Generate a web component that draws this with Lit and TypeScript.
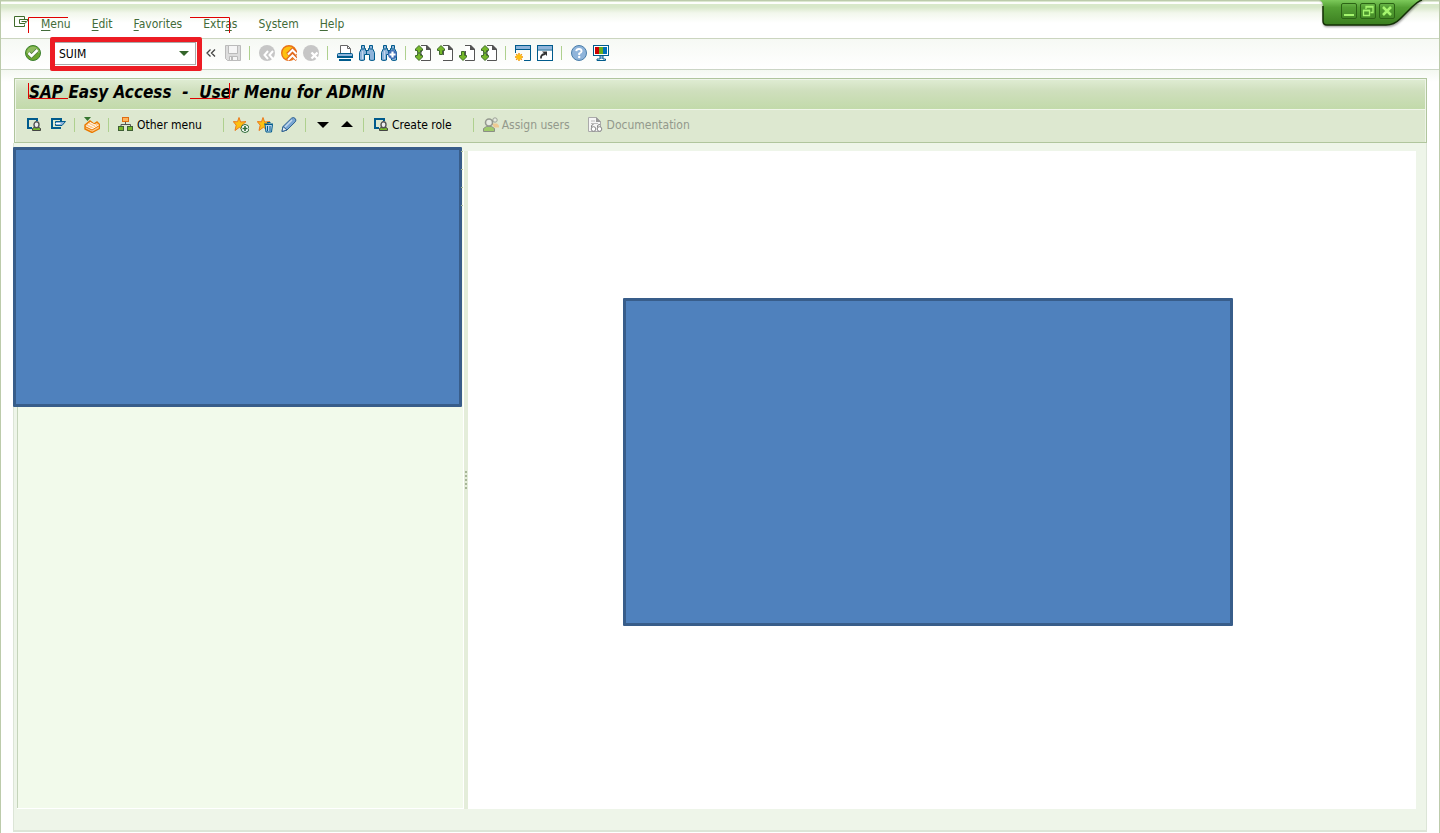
import { LitElement, html, css, svg, nothing, TemplateResult } from "lit";
import { customElement, property } from "lit/decorators.js";

const NAVY = "#005b8c";
const SKY = "#8fb4da";
const LEAF = "#76b82a";
const DARK = "#3f6b2a";
const GREY = "#c6c6c6";

const page = svg`<path d="M6.500 .5h5.500l3.500 3.500v11.500h-9z" fill="#fff" stroke="none"/><path d="M6 .5h6M15.500 4v11.500H6M6.500 6v4" fill="none" stroke="#555" /><path d="M11 0h1l4 4v1h-5z" fill="#555"/>`;
const doubleArrow = svg`<path d="M4 .5 7.500 4v1.500h-2v5h2V12L4 15.500.5 12v-1.500h2v-5h-2V4z" fill="${LEAF}" stroke="${DARK}"/><path d="M.5 8h7" stroke="#fff"/><path d="M2 7.500h4M2 8.500h4" stroke="${DARK}" stroke-width=".8"/>`;
const star = svg`<path d="M6 .5 7.600 5l5.400-.4-4 3.600 2 5.300-4.600-3.200L2 13.500l1.200-5.300L.3 4.600l4.200.2z" fill="#fdc010" stroke="#ea7a1e"/>`;
const binocular = svg`<path d="M2.500 .5h3v3h1v2h3v-2h1v-3h3v3l2 4v7.500q-2.500 1-5 0V9.500h-5V15q-2.500 1-5 0V7.500l2-4z" fill="${SKY}" stroke="${NAVY}"/><path d="M2.500 4h3M10.500 4h3M7.500 6v3" stroke="${NAVY}"/><path d="M3.500 6v8" stroke="#c5d9ee"/>`;
const person = svg`<g transform="translate(6 4)"><path d="M.5 9.500V7.500L2 6.500h5l1.500 1v2z" fill="${LEAF}" stroke="#444"/><ellipse cx="4.500" cy="3.700" rx="2.500" ry="3" fill="#eee" stroke="#555" stroke-width="1.400"/></g>`;

const ICONS: Record<string, TemplateResult> = {
  exit: svg`<path d="M10.500 4V.5H.5v10h10V8.500" fill="none" stroke="${DARK}"/><path d="M5.500 3.500h9l-3.500 4H5.500z" fill="#fff" stroke="${DARK}"/><path d="M12 5.500H7.500" stroke="${DARK}"/>`,
  check: svg`<circle cx="8" cy="8" r="7.500" fill="#6ba52e" stroke="#3c8030"/><path d="M1.500 8a6.500 6.500 0 0 1 13 0" fill="#a3ca7d" opacity=".6"/><path d="m3.500 8 3 3 6-6" fill="none" stroke="#557a42" stroke-width="4"/><path d="m3.500 8 3 3 6-6" fill="none" stroke="#fff" stroke-width="2.500"/>`,
  save: svg`<path d="M.5.5h15v15H2.500l-2-2z" fill="#ddd" stroke="#bbb"/><path d="M3.500.5h9v8h-9zM4.500 11.500h8v4h-8z" fill="#f6f6f6" stroke="#bbb"/><path d="M6 12h2v3H6z" fill="#bbb"/>`,
  back: svg`<circle cx="8" cy="8" r="8" fill="${GREY}"/><path d="m9 6-3.500 4L9 14m5-8-3.500 4 3.500 4" fill="none" stroke="#fff" stroke-width="2"/>`,
  upExit: svg`<circle cx="8" cy="8" r="7.300" fill="#fdc010" stroke="#ea7319" stroke-width="1.400"/><path d="m6.500 9.500 5-4.500 4.500 4M6.500 15l5-4.500 4.500 4" fill="none" stroke="#e0651d" stroke-width="4"/><path d="m7 9.500 4.500-4.500 4 4M7 15l4.500-4.500 4 4" fill="none" stroke="#fff" stroke-width="2"/>`,
  cancel: svg`<circle cx="8" cy="8" r="8" fill="${GREY}"/><path d="m8.500 7.500 6 6m0-6-6 6" stroke="#fff" stroke-width="2.400"/>`,
  print: svg`<path d="M3.500 8V.5h7l3 3V8" fill="#fff" stroke="#666"/><path d="M10.500 1v2.500h2.500" fill="none" stroke="#666"/><rect x=".5" y="8.500" width="15" height="4" rx="1" fill="${SKY}" stroke="${NAVY}"/><path d="M0 12h16M2 15h12" stroke="${NAVY}" stroke-width="2"/><path d="M3 13.500h10" stroke="#fff"/>`,
  find: svg`${binocular}`,
  findNext: svg`${binocular}<circle cx="11.500" cy="9.500" r="4.500" fill="#3f6db5"/><path d="M11.500 6.500v6M8.500 9.500h6" stroke="#fff" stroke-width="2.200"/>`,
  firstPage: svg`${page}${doubleArrow}`,
  prevPage: svg`${page}<path d="M4 .5 7.500 4v1.500h-2v4h-3v-4h-2V4z" fill="${LEAF}" stroke="${DARK}"/>`,
  nextPage: svg`${page}<path d="M4 15.500.5 12v-1.500h2v-4h3v4h2V12z" fill="${LEAF}" stroke="${DARK}"/>`,
  lastPage: svg`${page}${doubleArrow}`,
  newSession: svg`<rect x=".5" y=".5" width="15" height="4" fill="${SKY}" stroke="${NAVY}"/><path d="M.5 5v3M15.500 5v10.500H9" fill="none" stroke="${NAVY}"/><path d="M4 8v8M0 12h8M1.200 9.200l5.600 5.600m0-5.600-5.600 5.600" stroke="#f39200" stroke-width="1.400"/><circle cx="4" cy="12" r="2.500" fill="#fdc010"/>`,
  shortcut: svg`<rect x=".5" y=".5" width="15" height="15" fill="#fff" stroke="${NAVY}"/><path d="M1 1h14v3.500H1z" fill="${SKY}"/><path d="M0 5h16" stroke="${NAVY}"/><path d="M4 13.500q-.5-4 4-4.500" fill="none" stroke="#333" stroke-width="1.800"/><path d="M5 6.500h5V11z" fill="#333"/>`,
  help: svg`<circle cx="8" cy="8" r="7.500" fill="${SKY}" stroke="#4a7eaa"/><path d="M5.200 6.200Q5.500 4 8 4t2.600 2.200Q10.500 7.500 8.200 8.500V10" fill="none" stroke="#fff" stroke-width="1.900"/><circle cx="8.200" cy="12" r="1.200" fill="#fff"/>`,
  layout: svg`<rect x=".5" y=".5" width="15" height="10" fill="#fff" stroke="${NAVY}"/><path d="M2 2h4v7H2z" fill="#c00"/><path d="M6 2h4v7H6z" fill="#6aad1c"/><path d="M10 2h4v7h-4z" fill="#0070b8"/><path d="M7 11h3v3H7z" fill="${SKY}"/><path d="M7 11v3H4v1.500h8.500V14H10v-3" fill="none" stroke="${NAVY}"/>`,
  roleUser: svg`<path d="M11 4V2H2v9h4" fill="none" stroke="${NAVY}" stroke-width="2"/>${person}`,
  sessionExit: svg`<path d="M11 4V2H2v9h9" fill="none" stroke="${NAVY}" stroke-width="2"/><path d="M5.500 4.500h10L12 8.500H5.500z" fill="${SKY}" stroke="${NAVY}"/><path d="M5.500 6.500h5" stroke="#fff"/>`,
  sapMenu: svg`<path d="M0 0h7L3.500 4z" fill="#35752f"/><path d="m1 8 5-4 4 3 3-2 2.500 2.500v4L8 15.500 1 12z" fill="#fdc98a" stroke="#ea7a00" stroke-width="1.400"/><path d="m2 9 6 3 7-4M4 7l6 3M6 5.500l6 3" fill="none" stroke="#fff"/><path d="m1 9.500 7 3.500 7.500-4.500" fill="none" stroke="#ea7a00"/>`,
  hierarchy: svg`<path d="M7.500 5v3M3 10V7.500h9.500V10" fill="none" stroke="#555"/><rect x="4.500" y=".5" width="6" height="4" fill="#fdb45c" stroke="#e06c10"/><rect x=".5" y="9.500" width="5" height="4" fill="${LEAF}" stroke="#3f5f35"/><rect x="9.500" y="9.500" width="5" height="4" fill="${LEAF}" stroke="#3f5f35"/>`,
  addFavorite: svg`${star}<circle cx="12" cy="11.500" r="4" fill="#fff" stroke="#2c6a35"/><path d="M12 9v5M9.500 11.500h5" stroke="#2c6a35" stroke-width="1.600"/>`,
  deleteFavorite: svg`${star}<path d="M8 7.500h7.500L14.500 15H9z" fill="#b7d3ec" stroke="${NAVY}"/><path d="M7 7h9M10 5.500h3.500M10.500 9v5M13 9v5" stroke="${NAVY}"/>`,
  edit: svg`<path d="M1 14.500l1-5L10.500 1.200q2-1.400 3.600.2t.2 3.400L6 13z" fill="#78a5d2" stroke="#2d6090"/><path d="m4 10 7-7" stroke="#c5daee" stroke-width="1.500"/><path d="M1 14.500l1-5 4 3.500z" fill="#e8eef5" stroke="#2d6090"/>`,
  moveDown: svg`<path d="M2 5h12L8 11z" fill="#000"/>`,
  moveUp: svg`<path d="M2 10h12L8 4z" fill="#000"/>`,
  users: svg`<g opacity=".55"><circle cx="12" cy="3" r="2.200" fill="#eee" stroke="#666"/><path d="M9 6.500h5l2 2v2h-5z" fill="#fdb060"/></g><g opacity=".6"><path d="M.5 14.500v-3l3-2h5l3 2v3z" fill="${LEAF}" stroke="#555"/><circle cx="6" cy="5.500" r="3.500" fill="#eee" stroke="#666" stroke-width="1.600"/></g>`,
  document: svg`<path d="M.5.5h8l4 4v10H.5z" fill="#f5f5f5" stroke="#aaa"/><path d="M8 0l5 5H8z" fill="#999"/><path d="M3 4h4M3 6.500h7" stroke="#bbb"/><path d="M3.500 10.500V9q0-1.500 2-1.500M9.500 10.500V9q0-1.500 2.500-1.500" fill="none" stroke="#888"/><circle cx="5.500" cy="12" r="2.300" fill="#fff" stroke="#888"/><circle cx="11.500" cy="12" r="2.300" fill="#fff" stroke="#888"/>`,
};

const icon = (name: string) =>
  html`<svg class="icon" viewBox="0 0 16 16" width="16" height="16" aria-hidden="true">${ICONS[name]}</svg>`;

const controls = css`
  button {
    font: inherit;
    color: inherit;
    background: none;
    border: 0;
    padding: 0;
    margin: 0;
    display: flex;
    align-items: center;
    gap: 3px;
    white-space: nowrap;
    flex: none;
  }
  button:disabled {
    color: #93998c;
  }
  .icon {
    display: block;
    flex: none;
  }
`;

@customElement("tool-group")
export class ToolGroup extends LitElement {
  @property({ attribute: false }) tools: [string, string, boolean?][] = [];
  @property({ type: Boolean }) labelled = false;

  static styles = [
    controls,
    css`
      :host {
        display: flex;
        align-items: center;
        gap: var(--tool-gap, 6px);
      }
    `,
  ];

  render() {
    return this.tools.map(
      ([name, label, disabled]) => html`
        <button type="button" aria-label=${label} ?disabled=${disabled}>
          ${icon(name)}${this.labelled ? html`<span>${label}</span>` : nothing}
        </button>
      `
    );
  }
}

@customElement("app-root")
export class AppRoot extends LitElement {
  static styles = [
    controls,
    css`
      :host {
        display: block;
        font: 12px/16px "DejaVu Sans Condensed", "DejaVu Sans", sans-serif;
        color: #000;
      }
      .window {
        box-sizing: border-box;
        min-height: 100vh;
        display: flex;
        flex-direction: column;
        position: relative;
        background: #fff;
        border: solid #bccbab;
        border-width: 1px 1px 0;
        box-shadow: inset 4px 0 4px -2px #eee;
      }
      .menubar {
        display: flex;
        align-items: center;
        gap: 12px;
        height: 38px;
        box-sizing: border-box;
        padding: 8px 13px 0;
        border-bottom: 1px solid #cbd5bf;
        background: linear-gradient(#dce8d0 0 1px, #fdfefc 1px 3px, #d8e8ca 3px 6px, #f2f7ec 12px, #fff 22px);
      }
      .menus {
        display: flex;
        gap: 21px;
        color: #426b39;
      }
      .menus u {
        text-underline-offset: 2px;
      }
      .toolbar {
        display: flex;
        align-items: center;
        height: 28px;
        padding: 0 24px 2px;
        border-bottom: 1px solid #cbd5c5;
        background: linear-gradient(#f6f9f4, #fff);
        --tool-gap: 6px;
      }
      .sep {
        width: 1px;
        height: 14px;
        margin: 0 9px 0 8px;
        background: #aed08e;
        flex: none;
      }
      .command {
        position: relative;
        display: flex;
        align-items: center;
        box-sizing: border-box;
        width: 142px;
        height: 23px;
        margin: 0 10px 0 13px;
        border: 1px solid #aaa;
        background: #fff;
      }
      .command::after {
        content: "";
        position: absolute;
        inset: -6px -7px -7px -5px;
        border: 5px solid #ed1c24;
        border-radius: 2px;
        pointer-events: none;
      }
      .command input {
        flex: 1;
        min-width: 0;
        border: 0;
        outline: 0;
        padding: 1px 0 0 4px;
        font: inherit;
        color: #000;
        background: none;
      }
      .command button {
        padding: 0 6px;
      }
      .collapse {
        width: 10px;
        margin-right: 9px;
      }
      .workspace {
        flex: 1;
        display: flex;
        flex-direction: column;
        padding: 8px 12px 1px;
        background: linear-gradient(#f4f8f1, #fff 12px);
      }
      .header {
        border: 1px solid #b0c59d;
        margin-left: 1px;
        background: #dde8d0;
      }
      h1 {
        margin: 0;
        padding: 0 14px;
        height: 31px;
        box-sizing: border-box;
        border-bottom: 1px solid #f0f6e9;
        box-shadow: inset 1px 1px #eef5e8, inset -1px 0 #eef5e8;
        font-size: 17px;
        line-height: 26px;
        font-style: italic;
        font-weight: bold;
        white-space: pre;
        background: linear-gradient(#e0edd4, #cfdfbd 40%, #c2daaa);
      }
      .actions {
        display: flex;
        align-items: center;
        height: 30px;
        padding: 0 11px 2px;
        box-shadow: inset 1px 0 #eef5e8, inset -1px 0 #eef5e8;
        --tool-gap: 8px;
      }
      .actions .roomy {
        margin-right: 13px;
      }
      .actions .last {
        margin-left: 18px;
      }
      .body {
        flex: 1;
        display: flex;
        padding: 8px 10px 21px 3px;
        background: #eef5e9;
        border: solid #dce5d7;
        border-width: 0 1px 2px;
      }
      .tree {
        position: relative;
        box-sizing: border-box;
        width: 447px;
        flex: none;
        background: #f2faeb;
        border: solid #fff;
        border-width: 0 1px 1px 0;
        box-shadow: inset 1px 0 #c5d4bb;
      }
      .tree::after {
        content: "";
        position: absolute;
        right: 0;
        top: 0;
        width: 2px;
        height: 55px;
        background: repeating-linear-gradient(#a9bd9c 0 1px, transparent 1px 18px);
      }
      .mask {
        box-sizing: border-box;
        border: 3px solid #385d8a;
        background: #4f81bd;
        border-radius: 1px;
      }
      .tree .mask {
        position: absolute;
        left: -4px;
        top: -4px;
        width: 449px;
        height: 260px;
      }
      .splitter {
        width: 4px;
        flex: none;
        display: flex;
        flex-direction: column;
        align-items: center;
        justify-content: center;
        gap: 2px;
        background: #e4edda;
      }
      .splitter i {
        width: 2px;
        height: 2px;
        background: #a7b597;
      }
      .content {
        flex: 1;
        background: #fff;
      }
      .content .mask {
        margin: 147px 183px 0 155px;
        height: 328px;
      }
      .marks {
        position: absolute;
        left: 27px;
        top: 16px;
        pointer-events: none;
      }
      .caption {
        position: absolute;
        right: 11px;
        top: -1px;
        width: 112px;
        height: 30px;
      }
      .caption svg {
        display: block;
      }
      .caption .buttons {
        position: absolute;
        left: 25px;
        top: 3px;
        display: flex;
        gap: 3px;
      }
      .caption button {
        width: 16px;
        height: 16px;
        box-sizing: border-box;
        border: 1px solid #2c6415;
        border-radius: 2px;
        justify-content: center;
      }
    `,
  ];

  private menu(label: string, key: number) {
    return html`<button type="button"><span>${label.slice(0, key)}<u>${label[key]}</u>${label.slice(key + 1)}</span></button>`;
  }

  render() {
    const sep = html`<span class="sep"></span>`;
    return html`
      <div class="window">
        <nav class="menubar">
          <button type="button" aria-label="Window menu">
            <svg class="icon" width="15" height="16" viewBox="0 0 15 16" aria-hidden="true">${ICONS.exit}</svg>
          </button>
          <div class="menus">
            ${this.menu("Menu", 0)}${this.menu("Edit", 0)}${this.menu("Favorites", 0)}
            ${this.menu("Extras", 4)}${this.menu("System", 1)}${this.menu("Help", 0)}
          </div>
        </nav>

        <div class="toolbar">
          <tool-group .tools=${[["check", "Enter"]]}></tool-group>
          <div class="command">
            <input type="text" aria-label="Transaction code" value="SUIM" spellcheck="false" />
            <button type="button" aria-label="Command history">
              <svg width="10" height="5" viewBox="0 0 10 5"><path d="M0 0h10L5 5z" fill="#34652a" /></svg>
            </button>
          </div>
          <button type="button" class="collapse" aria-label="Hide command field">
            <svg width="10" height="8" viewBox="0 0 10 8"><path d="M4.500 .5 1 4l3.500 3.500M9 .5 5.500 4 9 7.500" fill="none" stroke="#444" stroke-width="1.300" /></svg>
          </button>
          <tool-group .tools=${[["save", "Save", true]]}></tool-group>
          ${sep}
          <tool-group .tools=${[["back", "Back", true], ["upExit", "Exit"], ["cancel", "Cancel", true]]}></tool-group>
          ${sep}
          <tool-group .tools=${[["print", "Print"], ["find", "Find"], ["findNext", "Find next"]]}></tool-group>
          ${sep}
          <tool-group .tools=${[["firstPage", "First page"], ["prevPage", "Previous page"], ["nextPage", "Next page"], ["lastPage", "Last page"]]}></tool-group>
          ${sep}
          <tool-group .tools=${[["newSession", "New session"], ["shortcut", "Create shortcut"]]}></tool-group>
          ${sep}
          <tool-group .tools=${[["help", "Help"], ["layout", "Customize layout"]]}></tool-group>
        </div>

        <main class="workspace">
          <header class="header">
            <h1>SAP Easy Access  -  User Menu for ADMIN</h1>
            <div class="actions">
              <tool-group .tools=${[["roleUser", "User menu"], ["sessionExit", "SAP menu"]]}></tool-group>
              ${sep}
              <tool-group .tools=${[["sapMenu", "Business workplace"]]}></tool-group>
              ${sep}
              <tool-group class="roomy" labelled .tools=${[["hierarchy", "Other menu"]]}></tool-group>
              ${sep}
              <tool-group .tools=${[["addFavorite", "Add to favorites"], ["deleteFavorite", "Delete favorites"], ["edit", "Change favorites"]]}></tool-group>
              ${sep}
              <tool-group .tools=${[["moveDown", "Move down"], ["moveUp", "Move up"]]}></tool-group>
              ${sep}
              <tool-group class="roomy" labelled .tools=${[["roleUser", "Create role"]]}></tool-group>
              ${sep}
              <tool-group labelled .tools=${[["users", "Assign users", true]]}></tool-group>
              <tool-group class="last" labelled .tools=${[["document", "Documentation", true]]}></tool-group>
            </div>
          </header>
          <div class="body">
            <aside class="tree"><div class="mask"></div></aside>
            <div class="splitter"><i></i><i></i><i></i><i></i><i></i></div>
            <section class="content"><div class="mask"></div></section>
          </div>
        </main>

        <svg class="marks" width="203" height="83" viewBox="0 0 203 83" aria-hidden="true">
          <path d="M40 .5H.5V16M162 .5h39.500V16M.5 66v15.500H40M162 81.500h39.500V66" fill="none" stroke="#e00000" />
        </svg>

        <div class="caption">
          <svg width="112" height="30" viewBox="0 0 112 30" aria-hidden="true">
            <defs>
              <linearGradient id="tab" x2="0" y2="1">
                <stop offset="0" stop-color="#7cc95a" />
                <stop offset=".3" stop-color="#54a034" />
                <stop offset="1" stop-color="#3b7e20" />
              </linearGradient>
              <filter id="blur"><feGaussianBlur stdDeviation="1" /></filter>
            </defs>
            <path d="M4 0Q7 2 7 6v16q0 5 4 5h60q8 0 14-6L98 8q6-6 10-8z" fill="#000" opacity=".4" filter="url(#blur)" />
            <path d="M4 0Q7 2 7 6v15q0 4 4 4h59q8 0 14-6L96 7q6-6 10-7z" fill="url(#tab)" />
            <path d="M7 6v15q0 4 4 4h59q8 0 14-6L96 7q6-6 10-7" fill="none" stroke="#143006" stroke-width="1.500" />
          </svg>
          <div class="buttons">
            <button type="button" aria-label="Minimize"><svg width="12" height="12" viewBox="0 0 12 12"><path d="M1 10h10" stroke="#a5f56e" stroke-width="2" /></svg></button>
            <button type="button" aria-label="Restore"><svg width="12" height="12" viewBox="0 0 12 12"><path d="M4 4V1.500h7v6H8.500M4 2h7M1 5.500h7" fill="none" stroke="#a5f56e" stroke-width="1.300" /><path d="M1.500 5.500h6v5h-6z" fill="none" stroke="#a5f56e" stroke-width="1.300" /></svg></button>
            <button type="button" aria-label="Close"><svg width="12" height="12" viewBox="0 0 12 12"><path d="m2 2 8 8m0-8-8 8" stroke="#a5f56e" stroke-width="2.500" /></svg></button>
          </div>
        </div>
      </div>
    `;
  }
}
